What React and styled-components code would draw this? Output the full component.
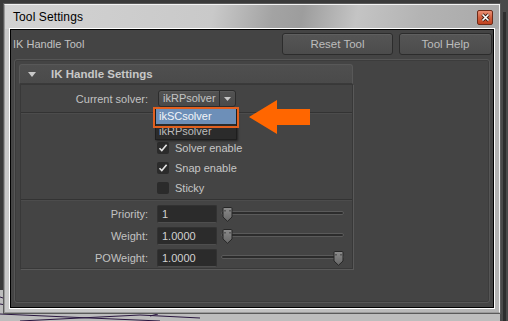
import React from "react";
import styled, { createGlobalStyle } from "styled-components";

const Global = createGlobalStyle`
  html, body { margin: 0; padding: 0; background: #3b3b3b; }
  body { font-family: "Liberation Sans", Arial, sans-serif; }
  * { box-sizing: border-box; }
`;

const Desktop = styled.div`
  position: relative;
  width: 508px;
  height: 321px;
  overflow: hidden;
  background: #3c3c3c;
`;

const Backdrop = styled.svg`
  position: absolute;
  left: 0;
  top: 0;
`;

const Window = styled.div`
  position: absolute;
  left: 4px;
  top: 4px;
  width: 496px;
  height: 309px;
  display: flex;
  flex-direction: column;
  border: 1px solid #f2f2f2;
  border-left-color: #9a9a9a;
  border-bottom-color: #9a9a9a;
  box-shadow: 0 0 0 1px #5a5a5a;
  background: linear-gradient(to right, #c9c9c9, #c2c2c2 50%, #b4b4b4);
`;

const TitleBar = styled.div`
  height: 24px;
  flex: none;
  display: flex;
  align-items: center;
  justify-content: space-between;
  padding: 0 6px 0 8px;
  background: linear-gradient(
    100deg,
    #d3d3d3 0%,
    #c9c9c9 42%,
    #a3a3a3 54%,
    #9d9d9d 60%,
    #c4c4c4 71%,
    #b3b3b3 84%,
    #a9a9a9 100%
  );
`;

const Title = styled.span`
  font-size: 12px;
  color: #000;
  letter-spacing: 0.1px;
`;

const CloseButton = styled.div`
  width: 16px;
  height: 15px;
  border: 1px solid #6b2a18;
  border-radius: 2px;
  background: linear-gradient(to bottom, #eb8f74, #d1603f 50%, #c0421f);
  display: flex;
  align-items: center;
  justify-content: center;
`;

const Client = styled.div`
  flex: 1;
  margin: 0 5px 4px 5px;
  border: 1px solid #000;
  box-shadow: 0 0 0 1px #fff;
  background: #444444;
  display: flex;
  flex-direction: column;
  color: #c6c6c6;
  font-size: 11px;
`;

const ToolRow = styled.div`
  height: 27px;
  flex: none;
  display: flex;
  align-items: center;
  padding: 0 1px 0 2px;
  gap: 6px;
`;

const ToolName = styled.span`
  flex: 1;
  color: #c2c2c2;
`;

const Button = styled.div`
  width: ${(p) => p.$w}px;
  height: 22px;
  display: flex;
  align-items: center;
  justify-content: center;
  border: 1px solid #2c2c2c;
  border-radius: 3px;
  background: linear-gradient(to bottom, #555555, #4c4c4c);
  box-shadow: inset 0 1px 0 #5f5f5f;
  color: #bdbdbd;
  font-size: 11.5px;
`;

const Frame = styled.div`
  flex: 1;
  margin: 2px 3px 4px 3px;
  border: 1px solid #565656;
  border-radius: 3px;
  box-shadow: inset 0 0 0 1px #3c3c3c;
  padding: 4px 0 0 4px;
`;

const Section = styled.div`
  width: 334px;
  display: flex;
  flex-direction: column;
`;

const Header = styled.div`
  height: 20px;
  display: flex;
  align-items: center;
  padding-left: 8px;
  background: linear-gradient(to bottom, #4f4f4f, #4a4a4a);
  border: 1px solid #585858;
  border-bottom-color: #3a3a3a;
  border-radius: 3px 3px 0 0;
  font-weight: bold;
  color: #c8c8c8;
  font-size: 11.5px;
`;

const Caret = styled.svg`
  margin-right: 15px;
  flex: none;
`;

const Body = styled.div`
  margin-left: 1px;
  border: 1px solid #383838;
  box-shadow: 1px 1px 0 #595959;
  display: flex;
  flex-direction: column;
`;

const SolverRow = styled.div`
  height: 27px;
  display: flex;
  align-items: center;
`;

const Label = styled.span`
  width: 127px;
  margin-right: 9px;
  text-align: right;
  color: #c2c2c2;
  flex: none;
`;

const Group = styled.div`
  border-top: 1px solid #333333;
  box-shadow: inset 0 1px 0 #4c4c4c;
  display: flex;
  flex-direction: column;
  padding: ${(p) => p.$pad};
  gap: ${(p) => p.$gap || 0}px;
`;

const DropWrap = styled.div`
  position: relative;
  margin-left: 1px;
`;

const Dropdown = styled.div`
  width: 78px;
  height: 17px;
  display: flex;
  border: 1px solid #2c2c2c;
  border-radius: 3px;
  background: linear-gradient(to bottom, #525252, #4a4a4a);
  box-shadow: inset 0 1px 0 #5a5a5a;
`;

const DropText = styled.span`
  flex: 1;
  padding-left: 4px;
  line-height: 15px;
  color: #c4c4c4;
`;

const DropArrow = styled.span`
  width: 16px;
  border-left: 1px solid #2c2c2c;
  display: flex;
  align-items: center;
  justify-content: center;
`;

const Popup = styled.div`
  position: absolute;
  left: -3px;
  top: 18px;
  width: 82px;
  height: 32px;
  background: #2b2b2b;
  border: 1px solid #1e1e1e;
  box-shadow: 1px 1px 2px rgba(0, 0, 0, 0.5);
  display: flex;
  flex-direction: column;
`;

const PopupItem = styled.div`
  height: 15px;
  line-height: 15px;
  padding-left: 3px;
  background: ${(p) => (p.$active ? "#6d8fb8" : "transparent")};
  color: ${(p) => (p.$active ? "#f2f5f8" : "#bcbcbc")};
`;

const Highlight = styled.div`
  position: absolute;
  left: -5px;
  top: 17px;
  width: 86px;
  height: 21px;
  border: 2px solid #e2601f;
`;

const Pointer = styled.svg`
  position: absolute;
  left: 91px;
  top: 10px;
`;

const CheckRow = styled.div`
  height: 20px;
  display: flex;
  align-items: center;
  gap: 6px;
  padding-left: 136px;
`;

const Box = styled.div`
  width: 12px;
  height: 12px;
  border-radius: 2px;
  background: #2b2b2b;
  display: flex;
  align-items: center;
  justify-content: center;
`;

const SliderRow = styled.div`
  height: 18px;
  display: flex;
  align-items: center;
`;

const Field = styled.div`
  width: 60px;
  height: 18px;
  border-radius: 2px;
  background: #2b2b2b;
  border: 1px solid #323232;
  border-bottom-color: #4e4e4e;
  padding-left: 4px;
  line-height: 16px;
  color: #d2d2d2;
`;

const Slider = styled.div`
  position: relative;
  width: 123px;
  height: 18px;
  margin-left: 4px;
`;

const Track = styled.div`
  position: absolute;
  left: 0;
  right: 0;
  top: 6px;
  height: 4px;
  border-radius: 2px;
  background: #2c2c2c;
  border: 1px solid #5a5a5a;
`;

const Thumb = styled.svg`
  position: absolute;
  top: 2px;
`;

const checks = [
  { label: "Solver enable", on: true },
  { label: "Snap enable", on: true },
  { label: "Sticky", on: false },
];

const sliders = [
  { label: "Priority:", value: "1", pos: 0 },
  { label: "Weight:", value: "1.0000", pos: 0 },
  { label: "POWeight:", value: "1.0000", pos: 1 },
];

function Check() {
  return (
    <svg width="10" height="10" viewBox="0 0 10 10">
      <polyline points="1.5,5.2 3.8,7.6 8.6,1.8" fill="none" stroke="#e4e4e4" strokeWidth="1.6" />
    </svg>
  );
}

function ThumbIcon({ left }) {
  return (
    <Thumb width="11" height="15" viewBox="0 0 11 15" style={{ left }}>
      <defs>
        <linearGradient id="tg" x1="0" y1="0" x2="0" y2="1">
          <stop offset="0" stopColor="#8c8c8c" />
          <stop offset="1" stopColor="#666666" />
        </linearGradient>
      </defs>
      <path d="M1 1.5 Q1 0.5 2 0.5 H9 Q10 0.5 10 1.5 V10 L5.5 14.3 L1 10 Z" fill="url(#tg)" stroke="#262626" strokeWidth="1" />
      <path d="M3 3 V4.5 M8 3 V4.5" stroke="#2e2e2e" strokeWidth="1" />
    </Thumb>
  );
}

export default function App() {
  return (
    <>
      <Global />
      <Desktop>
        <Backdrop width="508" height="321" viewBox="0 0 508 321">
          <rect x="0" y="0" width="508" height="321" fill="#3a3a3a" />
          <rect x="0" y="290" width="508" height="31" fill="#bdbdbd" />
          <rect x="500" y="0" width="8" height="321" fill="#4a4a4a" />
          <rect x="503" y="12" width="3" height="309" fill="#2e2e2e" />
          <g stroke="#2a1640" strokeWidth="1" fill="none">
            <path d="M0 297 L6 299" />
            <path d="M0 304 L6 305" />
            <path d="M0 314 L90 318 L160 321" />
            <path d="M20 321 L140 315 L200 318" />
            <path d="M150 316 L158 314" />
          </g>
        </Backdrop>
        <Window>
          <TitleBar>
            <Title>Tool Settings</Title>
            <CloseButton>
              <svg width="9" height="9" viewBox="0 0 9 9">
                <path d="M1.5 1.5 L7.5 7.5 M7.5 1.5 L1.5 7.5" stroke="#3a1a10" strokeWidth="3.2" />
                <path d="M1.5 1.5 L7.5 7.5 M7.5 1.5 L1.5 7.5" stroke="#ffffff" strokeWidth="1.6" />
              </svg>
            </CloseButton>
          </TitleBar>
          <Client>
            <ToolRow>
              <ToolName>IK Handle Tool</ToolName>
              <Button $w={111}>Reset Tool</Button>
              <Button $w={93}>Tool Help</Button>
            </ToolRow>
            <Frame>
              <Section>
                <Header>
                  <Caret width="8" height="5" viewBox="0 0 8 5">
                    <path d="M0 0 H8 L4 5 Z" fill="#c8c8c8" />
                  </Caret>
                  IK Handle Settings
                </Header>
                <Body>
                  <SolverRow>
                    <Label>Current solver:</Label>
                    <DropWrap>
                      <Dropdown>
                        <DropText>ikRPsolver</DropText>
                        <DropArrow>
                          <svg width="7" height="4" viewBox="0 0 7 4">
                            <path d="M0 0 H7 L3.5 4 Z" fill="#c8c8c8" />
                          </svg>
                        </DropArrow>
                      </Dropdown>
                      <Popup>
                        <PopupItem $active>ikSCsolver</PopupItem>
                        <PopupItem>ikRPsolver</PopupItem>
                      </Popup>
                      <Highlight />
                      <Pointer width="61" height="34" viewBox="0 0 61 34">
                        <polygon points="0,17 28,0 28,9 61,9 61,25 28,25 28,34" fill="#ff6600" />
                      </Pointer>
                    </DropWrap>
                  </SolverRow>
                  <Group $pad="25px 0 1px 0">
                    {checks.map((c) => (
                      <CheckRow key={c.label}>
                        <Box>{c.on && <Check />}</Box>
                        <span>{c.label}</span>
                      </CheckRow>
                    ))}
                  </Group>
                  <Group $pad="5px 0 1px 0" $gap={4}>
                    {sliders.map((s) => (
                      <SliderRow key={s.label}>
                        <Label>{s.label}</Label>
                        <Field>{s.value}</Field>
                        <Slider>
                          <Track />
                          <ThumbIcon left={1 + s.pos * 111} />
                        </Slider>
                      </SliderRow>
                    ))}
                  </Group>
                </Body>
              </Section>
            </Frame>
          </Client>
        </Window>
      </Desktop>
    </>
  );
}
